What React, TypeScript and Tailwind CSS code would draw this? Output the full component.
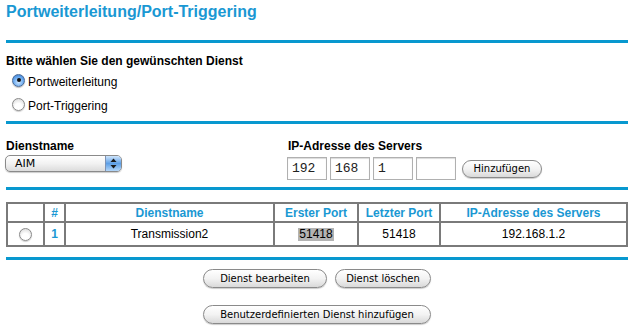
import React from "react";

function Radio({ checked }: { checked?: boolean }) {
  if (checked) {
    return (
      <span className="relative inline-flex h-[13px] w-[13px] shrink-0 items-center justify-center rounded-full border border-[#4a6a96] bg-[radial-gradient(circle_at_50%_65%,#cfe6fd_0%,#6aaaf0_55%,#2f6fc4_100%)] shadow-[0_1px_1px_rgba(0,0,0,0.25)]">
        <span className="h-[4px] w-[4px] rounded-full bg-[#111]" />
      </span>
    );
  }
  return (
    <span className="inline-flex h-[13px] w-[13px] shrink-0 rounded-full border border-[#8a8a8a] bg-[radial-gradient(circle_at_50%_70%,#ffffff_35%,#d2d2d2_100%)] shadow-[0_1px_1px_rgba(0,0,0,0.2)]" />
  );
}

function AquaButton({ children, w, h = 19 }: { children: React.ReactNode; w: number; h?: number }) {
  return (
    <button
      style={{ width: w, height: h }}
      className="flex items-center justify-center rounded-full border border-[#8a8a8a] bg-linear-to-b from-white via-[#f3f3f3] to-[#d9d9d9] font-['DejaVu_Sans',Verdana,sans-serif] text-[10px] leading-none text-black shadow-[0_1px_1px_rgba(0,0,0,0.2)]"
    >
      {children}
    </button>
  );
}

function IpBox({ value }: { value: string }) {
  return (
    <div className="flex h-[23px] w-[40px] items-center border border-[#b0b0b0] bg-white pl-[4px] font-['Liberation_Mono','Courier_New',monospace] text-[13px] text-[#222] shadow-[inset_0_1px_1px_rgba(0,0,0,0.15)]">
      {value}
    </div>
  );
}

const Line = ({ mt }: { mt: string }) => <div className={`${mt} h-[3px] bg-[#0898cf]`} />;

export default function App() {
  const head = "flex items-center justify-center bg-white font-bold text-[#1a98d3]";
  const cell = "flex items-center justify-center bg-white";
  return (
    <div className="h-[333px] w-[637px] overflow-hidden bg-white font-['Liberation_Sans',Arial,sans-serif] text-[12px] leading-[14px] text-black">
      <div className="ml-[6px] w-[622px] pt-[3px]">
        <h1 className="text-[16px] font-bold leading-[18px] text-[#1a98d3]">Portweiterleitung/Port-Triggering</h1>
        <div className="mt-[19px] h-[3px] bg-[#0898cf]" />
        <div className="mt-[11px] font-bold">Bitte wählen Sie den gewünschten Dienst</div>
        <div className="flex flex-col">
          <label className="flex h-[24px] items-center gap-[3px] pl-[6px]">
            <Radio checked />
            <span className="mt-[3px]">Portweiterleitung</span>
          </label>
          <label className="flex h-[24px] items-center gap-[3px] pl-[6px]">
            <Radio />
            <span className="mt-[3px]">Port-Triggering</span>
          </label>
        </div>
        <Line mt="mt-[5px]" />
        <div className="mt-[15px] flex">
          <div className="w-[281px]">
            <div className="font-bold">Dienstname</div>
            <div className="-ml-[1px] mt-[2px] flex h-[17px] w-[117px] items-center overflow-hidden rounded-[5px] border border-[#8a8a8a] bg-linear-to-b from-white via-[#f2f2f2] to-[#dcdcdc] shadow-[0_1px_1px_rgba(0,0,0,0.2)]">
              <span className="pl-[9px] font-['DejaVu_Sans',Verdana,sans-serif] text-[11px] leading-none">AIM</span>
              <div className="ml-auto flex h-full w-[16px] items-center justify-center border-l border-[#7d93b5] bg-linear-to-b from-[#cfe5fb] via-[#5d9fe6] to-[#b3d6f8]">
                <svg width="7" height="11" viewBox="0 0 7 11">
                  <path d="M3.5 0.5 L6.5 4 L0.5 4 Z" fill="#1a1a1a" />
                  <path d="M3.5 10.5 L6.5 7 L0.5 7 Z" fill="#1a1a1a" />
                </svg>
              </div>
            </div>
          </div>
          <div>
            <div className="pl-[1px] font-bold">IP-Adresse des Servers</div>
            <div className="mt-[4px] flex items-center">
              <div className="flex gap-[3px]">
                <IpBox value="192" />
                <IpBox value="168" />
                <IpBox value="1" />
                <IpBox value="" />
              </div>
              <div className="ml-[6px]">
                <AquaButton w={80} h={18}>Hinzufügen</AquaButton>
              </div>
            </div>
          </div>
        </div>
        <Line mt="mt-[7px]" />
        <div className="mt-[12px] grid grid-cols-[35px_19px_207px_82px_80px_185px] grid-rows-[17px_22px] gap-[2px] border-2 border-[#7a7a7a] bg-[#7a7a7a]">
          <div className={cell}></div>
          <div className={head}>#</div>
          <div className={head}>Dienstname</div>
          <div className={head}>Erster Port</div>
          <div className={head}>Letzter Port</div>
          <div className={head}>IP-Adresse des Servers</div>
          <div className={cell}><Radio /></div>
          <div className={`${cell} font-bold text-[#1a98d3]`}>1</div>
          <div className={cell}>Transmission2</div>
          <div className={cell}><span className="bg-[#b3b3b3] px-[1px] leading-[13px]">51418</span></div>
          <div className={cell}>51418</div>
          <div className={cell}>192.168.1.2</div>
        </div>
        <Line mt="mt-[10px]" />
        <div className="mt-[9px] flex justify-center gap-[8px]">
          <AquaButton w={124}>Dienst bearbeiten</AquaButton>
          <AquaButton w={96}>Dienst löschen</AquaButton>
        </div>
        <div className="mt-[17px] flex justify-center">
          <AquaButton w={228}>Benutzerdefinierten Dienst hinzufügen</AquaButton>
        </div>
      </div>
    </div>
  );
}
